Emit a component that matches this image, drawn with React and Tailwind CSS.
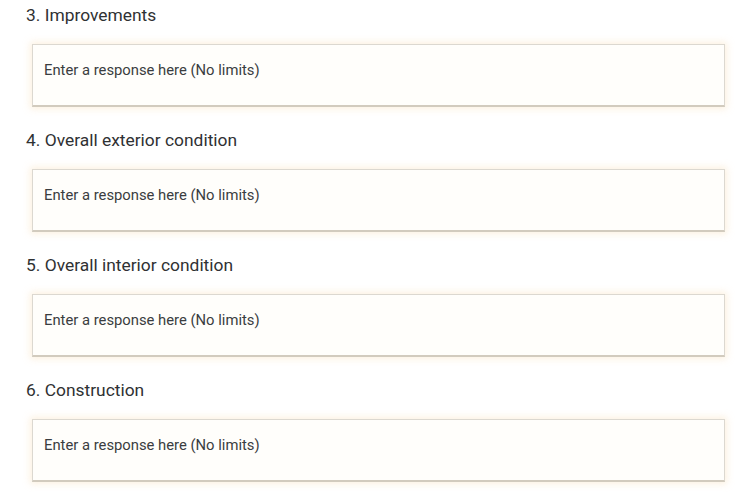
import React from 'react';

const questions = [
  { num: 3, label: 'Improvements' },
  { num: 4, label: 'Overall exterior condition' },
  { num: 5, label: 'Overall interior condition' },
  { num: 6, label: 'Construction' },
];

const Question = ({ num, label }) => (
  <div className="flex flex-col">
    <label className="pl-[26px] text-[17.4px] leading-6 text-[#2f3133]">
      {num}. {label}
    </label>
    <div className="mt-[17px] ml-[32px] w-[693px] h-[63px] bg-[#fffefb] border border-[#dcd8d0] border-b-[#d2cbbe] border-b-2 shadow-[0_0_7px_2px_rgba(245,215,165,0.35)] pl-[11px] pt-[13px]">
      <span className="text-[14.8px] leading-5 text-[#3a3d40]">Enter a response here (No limits)</span>
    </div>
  </div>
);

export default function App() {
  return (
    <div
      className="w-[745px] h-[494px] bg-white pt-[3px] flex flex-col gap-[21px] overflow-hidden"
      style={{ fontFamily: 'Roboto, "Liberation Sans", sans-serif' }}
    >
      {questions.map((q) => (
        <Question key={q.num} {...q} />
      ))}
    </div>
  );
}
